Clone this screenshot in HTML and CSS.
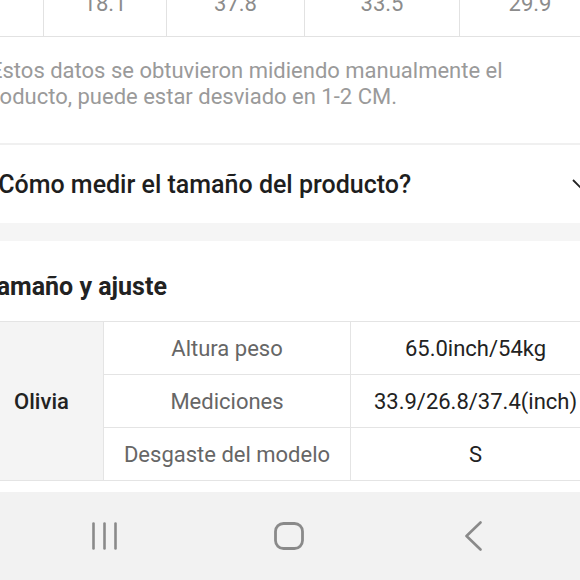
FILE: index.html
```html
<!DOCTYPE html>
<html>

	<head>
		<meta charset="UTF-8">
		<title>Tamaño y ajuste</title>
		<link rel="stylesheet" href="styles.css">
	</head>

	<body>
		<div class="page">
			<div class="size-row">
				<div class="cell"></div>
				<div class="cell">18.1</div>
				<div class="cell">37.8</div>
				<div class="cell">33.5</div>
				<div class="cell">29.9</div>
			</div>

			<p class="note">Estos datos se obtuvieron midiendo manualmente el producto, puede estar desviado en 1-2 CM.</p>

			<div class="howto">
				<span>¿Cómo medir el tamaño del producto?</span>
				<svg class="chevron" width="18" height="11" viewBox="0 0 18 11">
					<polyline points="1,1 9,9 17,1" fill="none" stroke="#222" stroke-width="1.8" />
				</svg>
			</div>

			<div class="spacer"></div>

			<section class="fit">
				<h2>Tamaño y ajuste</h2>
				<div class="model">
					<div class="name">Olivia</div>
					<div class="label">Altura peso</div>
					<div class="value">65.0inch/54kg</div>
					<div class="label">Mediciones</div>
					<div class="value">33.9/26.8/37.4(inch)</div>
					<div class="label">Desgaste del modelo</div>
					<div class="value">S</div>
				</div>
			</section>
		</div>

		<nav class="sysbar">
			<svg class="recents" width="28" height="28" viewBox="0 0 28 28">
				<g stroke="#8a8a8a" stroke-width="2.6" stroke-linecap="round">
					<line x1="2.5" y1="1.5" x2="2.5" y2="26.5" />
					<line x1="13.5" y1="1.5" x2="13.5" y2="26.5" />
					<line x1="24.5" y1="1.5" x2="24.5" y2="26.5" />
				</g>
			</svg>
			<svg class="home" width="30" height="28" viewBox="0 0 30 28">
				<rect x="1.5" y="1.5" width="27" height="25" rx="8" fill="none" stroke="#8a8a8a" stroke-width="2.8" />
			</svg>
			<svg class="back" width="18" height="30" viewBox="0 0 18 30">
				<polyline points="15.5,1.5 1.5,15 15.5,28.5" fill="none" stroke="#8a8a8a" stroke-width="2.6" stroke-linecap="round" stroke-linejoin="round" />
			</svg>
		</nav>
	</body>

</html>
```

FILE: styles.css
```css
html,
body {
	margin: 0;
	width: 100%;
	height: 100%;
	overflow: hidden;
	background: #fff;
	font-family: Roboto, "Liberation Sans", sans-serif;
}

/* the page is scrolled a little to the right */
.page {
	width: 620px;
	margin: -30px 0 0 -20px;
}

/* last row of the size chart, mostly scrolled away */
.size-row {
	display: grid;
	grid-template-columns: 64px 123px 138px 155px 1fr;
	height: 66px;
	border-bottom: 1px solid #e2e2e2;
}

.size-row .cell {
	display: flex;
	align-items: center;
	justify-content: center;
	border-right: 1px solid #e2e2e2;
	font-size: 22px;
	color: #8c8c8c;
}

.size-row .cell:last-child {
	border-right: none;
}

.note {
	width: 560px;
	margin: 0;
	padding: 21px 0 33px;
	font-size: 22px;
	line-height: 26px;
	color: #9a9a9a;
	text-indent: 10px;
}

.howto {
	display: flex;
	align-items: center;
	justify-content: space-between;
	height: 78px;
	padding: 0 10px 0 6px;
	border-top: 2px solid #f0f0f0;
	font-size: 25px;
	font-weight: 500;
	color: #1e1e1e;
}

.spacer {
	height: 18px;
	background: #f5f5f5;
}

.fit {
	padding-top: 31px;
	padding-bottom: 11px;
}

.fit h2 {
	margin: 0 0 19px;
	padding-left: 3px;
	line-height: 30px;
	font-size: 25px;
	font-weight: 700;
	color: #222;
}

.model {
	display: grid;
	grid-template-columns: 124px 247px 1fr;
	grid-auto-rows: 53px;
	border-top: 1px solid #e4e4e4;
	font-size: 22px;
}

.model div {
	display: flex;
	align-items: center;
	justify-content: center;
	box-sizing: border-box;
	border-bottom: 1px solid #e4e4e4;
}

.model .name {
	grid-row: span 3;
	border-right: 1px solid #e4e4e4;
	background: #f4f4f4;
	font-weight: 500;
	color: #222;
}

.model .label {
	border-right: 1px solid #e4e4e4;
	color: #666;
}

.model .value {
	color: #222;
}

.sysbar {
	display: flex;
	align-items: center;
	height: 88px;
	padding-left: 91px;
	background: #f2f2f2;
}

.sysbar .home {
	margin-left: 155px;
}

.sysbar .back {
	margin-left: 161px;
}
```
